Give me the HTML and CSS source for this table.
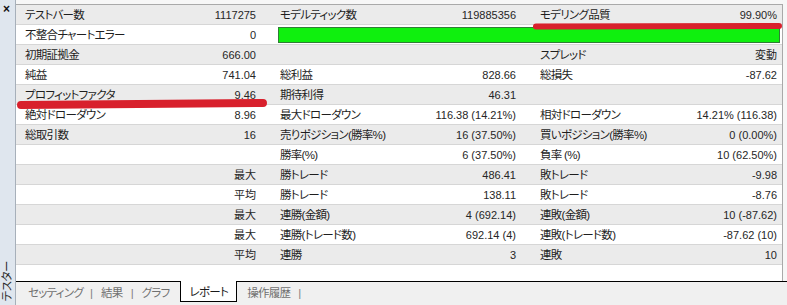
FILE: index.html
```html
<!DOCTYPE html>
<html lang="ja">
<head>
<meta charset="utf-8">
<title>テスター レポート</title>
<link rel="stylesheet" href="styles.css">
</head>
<body>
<div class="window">
  <aside class="sidebar">
    <span class="close">×</span>
    <span class="side-title">テスター</span>
  </aside>
  <div class="main">
    <div class="report">
      <div class="row">
        <span class="lbl g1">テストバー数</span><span class="val g1">1117275</span>
        <span class="lbl">モデルティック数</span><span class="val">119885356</span>
        <span class="lbl">モデリング品質</span><span class="val g3">99.90%</span>
      </div>
      <div class="row">
        <span class="lbl g1">不整合チャートエラー</span><span class="val g1">0</span>
        <span class="bar-cell"><span class="bar"></span></span>
      </div>
      <div class="row">
        <span class="lbl g1">初期証拠金</span><span class="val g1">666.00</span>
        <span class="lbl"></span><span class="val"></span>
        <span class="lbl">スプレッド</span><span class="val g3">変動</span>
      </div>
      <div class="row">
        <span class="lbl g1">純益</span><span class="val g1">741.04</span>
        <span class="lbl">総利益</span><span class="val">828.66</span>
        <span class="lbl">総損失</span><span class="val g3">-87.62</span>
      </div>
      <div class="row">
        <span class="lbl g1">プロフィットファクタ</span><span class="val g1">9.46</span>
        <span class="lbl">期待利得</span><span class="val">46.31</span>
        <span class="lbl"></span><span class="val g3"></span>
      </div>
      <div class="row">
        <span class="lbl g1">絶対ドローダウン</span><span class="val g1">8.96</span>
        <span class="lbl">最大ドローダウン</span><span class="val">116.38 (14.21%)</span>
        <span class="lbl">相対ドローダウン</span><span class="val g3">14.21% (116.38)</span>
      </div>
      <div class="row">
        <span class="lbl g1">総取引数</span><span class="val g1">16</span>
        <span class="lbl">売りポジション(勝率%)</span><span class="val">16 (37.50%)</span>
        <span class="lbl">買いポジション(勝率%)</span><span class="val g3">0 (0.00%)</span>
      </div>
      <div class="row">
        <span class="lbl g1"></span><span class="val g1"></span>
        <span class="lbl">勝率(%)</span><span class="val">6 (37.50%)</span>
        <span class="lbl">負率 (%)</span><span class="val g3">10 (62.50%)</span>
      </div>
      <div class="row">
        <span class="lbl g1"></span><span class="val g1">最大</span>
        <span class="lbl">勝トレード</span><span class="val">486.41</span>
        <span class="lbl">敗トレード</span><span class="val g3">-9.98</span>
      </div>
      <div class="row">
        <span class="lbl g1"></span><span class="val g1">平均</span>
        <span class="lbl">勝トレード</span><span class="val">138.11</span>
        <span class="lbl">敗トレード</span><span class="val g3">-8.76</span>
      </div>
      <div class="row">
        <span class="lbl g1"></span><span class="val g1">最大</span>
        <span class="lbl">連勝(金額)</span><span class="val">4 (692.14)</span>
        <span class="lbl">連敗(金額)</span><span class="val g3">10 (-87.62)</span>
      </div>
      <div class="row">
        <span class="lbl g1"></span><span class="val g1">最大</span>
        <span class="lbl">連勝(トレード数)</span><span class="val">692.14 (4)</span>
        <span class="lbl">連敗(トレード数)</span><span class="val g3">-87.62 (10)</span>
      </div>
      <div class="row">
        <span class="lbl g1"></span><span class="val g1">平均</span>
        <span class="lbl">連勝</span><span class="val">3</span>
        <span class="lbl">連敗</span><span class="val g3">10</span>
      </div>
      <div class="filler"></div>
    </div>
    <nav class="tabs">
      <span class="tab first">セッティング</span>
      <span class="sep">|</span>
      <span class="tab">結果</span>
      <span class="sep">|</span>
      <span class="tab">グラフ</span>
      <span class="tab active">レポート</span>
      <span class="tab">操作履歴</span>
      <span class="sep">|</span>
    </nav>
  </div>
  <svg class="marks" width="787" height="305" viewBox="0 0 787 305" aria-hidden="true">
    <path d="M536 26.5 L779 26" />
    <path class="thick" d="M21 105 L263 103" />
  </svg>
</div>
</body>
</html>
```

FILE: styles.css
```css
* { box-sizing: border-box; }

html, body {
  margin: 0;
  padding: 0;
}

body {
  width: 787px;
  height: 305px;
  overflow: hidden;
  background: #f0f0f0;
  font-family: "Liberation Sans", "Noto Sans CJK JP", sans-serif;
  font-feature-settings: "palt" 1;
  color: #1e1e1e;
}

.window {
  position: relative;
  display: flex;
  width: 787px;
  height: 305px;
}

.sidebar {
  width: 16px;
  flex: none;
  background: #dfe6ee;
  border-right: 1px solid #a7b0ba;
  display: flex;
  flex-direction: column;
  justify-content: space-between;
  align-items: center;
}

.close {
  font-size: 12px;
  font-weight: bold;
  line-height: 12px;
  margin-top: 3px;
  margin-right: 2px;
  color: #111;
}

.side-title {
  writing-mode: vertical-rl;
  text-orientation: sideways;
  transform: rotate(180deg);
  font-size: 11.5px;
  line-height: 14px;
  letter-spacing: -0.5px;
  color: #2a2a2a;
  margin-bottom: 4px;
  margin-right: 1px;
}

.main {
  flex: 1;
  display: flex;
  flex-direction: column;
  background: #f7f7f7;
}

.report {
  flex: 1;
  display: flex;
  flex-direction: column;
  margin-top: 4px;
  margin-right: 4px;
  background: #fff;
  border-top: 1px solid #a9a9a9;
  border-right: 1px solid #a9a9a9;
}

.row {
  display: grid;
  grid-template-columns: 130px 116px 150px 110px 149px 110px;
  height: 20px;
  border-bottom: 1px solid #d6d6d6;
  font-size: 11.5px;
  line-height: 20px;
}

.row:nth-child(odd) { background: #ebebeb; }

.lbl {
  padding-left: 18px;
  white-space: nowrap;
  letter-spacing: -0.7px;
}

.lbl.g1 { padding-left: 9px; }

.val {
  text-align: right;
  padding-right: 6px;
  white-space: nowrap;
  color: #262626;
  font-size: 11px;
}

.val.g3 { padding-right: 4px; }

.bar-cell {
  grid-column: 3 / span 4;
  padding: 2px 1px 0 16px;
}

.bar {
  display: block;
  height: 16px;
  background: #0ff00e;
  border: 1px solid #2f7d36;
}

.filler {
  flex: 1;
  background: #fff;
}

.tabs {
  height: 24px;
  flex: none;
  display: flex;
  align-items: flex-start;
  border-top: 1px solid #000;
  background: #f0f0f0;
  padding-left: 12px;
  font-size: 11.5px;
  color: #707070;
}

.tab, .sep {
  line-height: 20px;
  padding-top: 1px;
}

.tab {
  padding-left: 8px;
  padding-right: 8px;
  letter-spacing: -0.7px;
}
.tab.first { padding-left: 0; padding-right: 7px; }

.sep { color: #808080; }

.tab.active {
  margin-top: -1px;
  height: 21px;
  padding-top: 1px;
  padding-left: 9px;
  padding-right: 8px;
  background: #fff;
  border: 1px solid #000;
  border-top: none;
  color: #1a1a1a;
  margin-left: 2px;
  margin-right: 2px;
}

.marks {
  position: absolute;
  left: 0;
  top: 0;
  pointer-events: none;
}

.marks path {
  fill: none;
  stroke: #d8202c;
  stroke-width: 6;
  stroke-linecap: round;
}

.marks path.thick { stroke-width: 8; }
```
